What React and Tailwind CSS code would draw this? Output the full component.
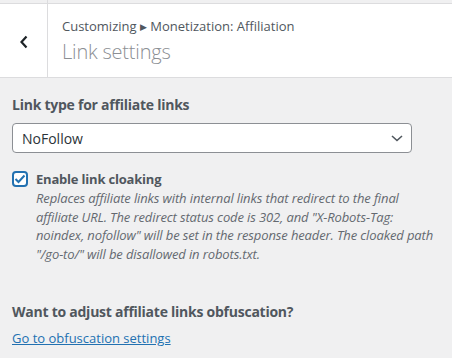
const App = () => {
  return (
    <div
      className="w-[452px] h-[358px] overflow-hidden bg-[#f0f0f1] text-[#50575e]"
      style={{ fontFamily: '"Open Sans", "Noto Sans", sans-serif' }}
    >
      {/* Header */}
      <div className="flex h-[78px] pt-[3px] border-b border-[#dcdcde]">
        <div className="w-[48px] flex items-center justify-center border-r border-[#dcdcde] -mt-[3px] pt-[3px]">
          <div className="w-[47px] h-full bg-white border-t border-[#dcdcde] flex items-center justify-center">
            <svg width="10" height="14" viewBox="0 0 10 14" className="mt-[2px]">
              <path d="M7.5 1.5 L2.5 7 L7.5 12.5" fill="none" stroke="#1d2327" strokeWidth="2.2" />
            </svg>
          </div>
        </div>
        <div className="flex-1 bg-white border-t border-[#dcdcde] pl-[14px] pt-[13px]">
          <div className="text-[13px] leading-[18px] text-[#50575e]">
            Customizing <span className="text-[9px] align-[1px]">▶</span> Monetization: Affiliation
          </div>
          <div className="text-[20px] leading-[28px] font-light tracking-[-0.2px] text-[#8c8f94] mt-[2px]">
            Link settings
          </div>
        </div>
      </div>

      {/* Content */}
      <div className="px-[12px] pt-[17px]">
        <div className="text-[14px] leading-[20px] font-bold tracking-[-0.25px]">Link type for affiliate links</div>
        <div className="mt-[8px] w-[400px] h-[30px] bg-white border border-[#8c8f94] rounded-[4px] flex items-center justify-between pl-[9px] pr-[8px]">
          <span className="text-[14px] text-[#2c3338]">NoFollow</span>
          <svg width="12" height="7" viewBox="0 0 12 7">
            <path d="M1 1 L6 5.5 L11 1" fill="none" stroke="#50575e" strokeWidth="1.6" />
          </svg>
        </div>

        <div className="mt-[17px] flex gap-[8px]">
          <div className="w-[16px] h-[16px] shrink-0 rounded-[4px] border-2 border-[#2271b1] bg-white flex items-center justify-center mt-[1px]">
            <svg width="12" height="10" viewBox="0 0 12 10">
              <path d="M1.5 5 L4.5 8 L10.5 1.5" fill="none" stroke="#2271b1" strokeWidth="2" />
            </svg>
          </div>
          <div>
            <div className="text-[13px] leading-[18px] font-bold tracking-[-0.2px]">Enable link cloaking</div>
            <p className="text-[13px] leading-[18.5px] italic tracking-[-0.12px] text-[#646970] mt-[1px]">
              Replaces affiliate links with internal links that redirect to the final affiliate URL. The redirect
              status code is 302, and "X-Robots-Tag: noindex, nofollow" will be set in the response header. The
              cloaked path "/go-to/" will be disallowed in robots.txt.
            </p>
          </div>
        </div>

        <div className="mt-[39px] text-[14px] leading-[20px] font-bold tracking-[-0.25px]">
          Want to adjust affiliate links obfuscation?
        </div>
        <a href="#" className="block mt-[7px] text-[13px] leading-[18px] text-[#2271b1] underline">
          Go to obfuscation settings
        </a>
      </div>
    </div>
  );
};

export default App;
